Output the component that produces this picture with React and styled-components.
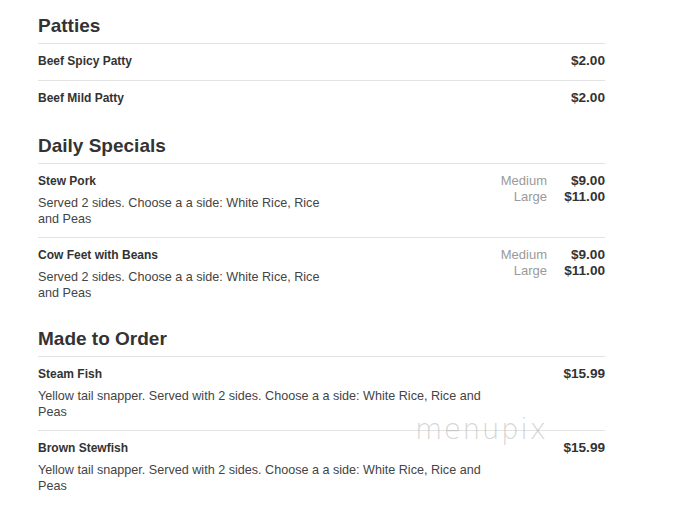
import React from 'react'
import styled, {createGlobalStyle} from 'styled-components'

const GlobalStyle = createGlobalStyle`
  body {
    margin: 0;
    background: #fff;
    font-family: "Liberation Sans", Arial, sans-serif;
    color: #333;
  }
`

const Page = styled.div`
  position: relative;
  width: 567px;
  padding: 15px 0 20px 38px;
`

const Section = styled.section`
  & + & {
    margin-top: 17.6px;
  }
`

const SectionTitle = styled.h2`
  margin: 0 0 6px;
  font-size: 19px;
  line-height: 22px;
  font-weight: bold;
  color: #333;
`

const Row = styled.div`
  display: flex;
  align-items: flex-start;
  border-top: 1px solid #e3e3e3;
  padding: 8px 0 10px;
`

const Info = styled.div`
  flex: 1;
  min-width: 0;
`

const Name = styled.div`
  font-size: 12px;
  font-weight: bold;
  line-height: 18px;
  color: #333;
`

const Description = styled.div`
  margin-top: 5px;
  max-width: ${({narrow}) => (narrow ? '296px' : '460px')};
  font-size: 12.6px;
  line-height: 16px;
  color: #444;
`

const Prices = styled.div`
  display: grid;
  grid-template-columns: auto 58px;
  padding-top: 1px;
`

const SizeLabel = styled.div`
  font-size: 13px;
  line-height: 16px;
  color: #9a9a9a;
  text-align: right;
`

const Price = styled.div`
  font-size: 13.6px;
  line-height: ${({single}) => (single ? '18px' : '16px')};
  font-weight: bold;
  color: #333;
  text-align: right;
`

const Watermark = styled.div`
  position: absolute;
  left: 415px;
  top: 413px;
  font-family: "DejaVu Sans", sans-serif;
  font-size: 28px;
  font-weight: 200;
  letter-spacing: 1.5px;
  color: rgba(150, 150, 150, 0.4);
  pointer-events: none;
`

const menu = [
  {
    title: 'Patties',
    items: [
      {name: 'Beef Spicy Patty', price: '$2.00'},
      {name: 'Beef Mild Patty', price: '$2.00'}
    ]
  },
  {
    title: 'Daily Specials',
    items: [
      {
        name: 'Stew Pork',
        description: 'Served 2 sides. Choose a a side: White Rice, Rice and Peas',
        sizes: [['Medium', '$9.00'], ['Large', '$11.00']]
      },
      {
        name: 'Cow Feet with Beans',
        description: 'Served 2 sides. Choose a a side: White Rice, Rice and Peas',
        sizes: [['Medium', '$9.00'], ['Large', '$11.00']]
      }
    ]
  },
  {
    title: 'Made to Order',
    items: [
      {
        name: 'Steam Fish',
        description: 'Yellow tail snapper. Served with 2 sides. Choose a a side: White Rice, Rice and Peas',
        price: '$15.99'
      },
      {
        name: 'Brown Stewfish',
        description: 'Yellow tail snapper. Served with 2 sides. Choose a a side: White Rice, Rice and Peas',
        price: '$15.99'
      }
    ]
  }
]

const MenuItem = ({name, description, price, sizes}) => (
  <Row>
    <Info>
      <Name>{name}</Name>
      {description && <Description narrow={!!sizes}>{description}</Description>}
    </Info>
    {sizes ? (
      <Prices>
        {sizes.map(([size, amount]) => (
          <React.Fragment key={size}>
            <SizeLabel>{size}</SizeLabel>
            <Price>{amount}</Price>
          </React.Fragment>
        ))}
      </Prices>
    ) : (
      <Price single>{price}</Price>
    )}
  </Row>
)

export default function App() {
  return (
    <Page>
      <GlobalStyle/>
      {menu.map(section => (
        <Section key={section.title}>
          <SectionTitle>{section.title}</SectionTitle>
          {section.items.map(item => <MenuItem key={item.name} {...item}/>)}
        </Section>
      ))}
      <Watermark>menupix</Watermark>
    </Page>
  )
}
